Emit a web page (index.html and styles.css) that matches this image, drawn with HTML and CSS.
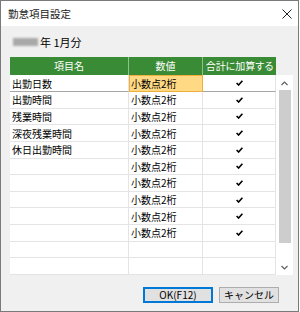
FILE: index.html
```html
<!DOCTYPE html>
<html lang="ja">
<head>
	<meta charset="UTF-8">
	<title>勤怠項目設定</title>
	<link rel="stylesheet" href="styles.css">
</head>
<body>
<div class="window">
  <div class="titlebar">
    <span class="title">勤怠項目設定</span>
    <svg class="close" width="10" height="10" viewBox="0 0 10 10"><path d="M0.5 0.5 L9.5 9.5 M9.5 0.5 L0.5 9.5" stroke="#222" stroke-width="1"/></svg>
  </div>
  <div class="content">
    <div class="period"><span class="blur"></span>年 1月分</div>

    <div class="grid-wrap">
      <div class="grid">
        <div class="head">項目名</div>
        <div class="head">数値</div>
        <div class="head last">合計に加算する</div>

        <div class="cell cur">出勤日数</div><div class="cell cur sel">小数点2桁</div><div class="cell cur chk"><svg width="7" height="6" viewBox="0 0 7 6"><path d="M0.6 3 L2.6 5 L6.4 0.8" fill="none" stroke="#000" stroke-width="1.6"/></svg></div>
        <div class="cell">出勤時間</div><div class="cell">小数点2桁</div><div class="cell chk"><svg width="7" height="6" viewBox="0 0 7 6"><path d="M0.6 3 L2.6 5 L6.4 0.8" fill="none" stroke="#000" stroke-width="1.6"/></svg></div>
        <div class="cell">残業時間</div><div class="cell">小数点2桁</div><div class="cell chk"><svg width="7" height="6" viewBox="0 0 7 6"><path d="M0.6 3 L2.6 5 L6.4 0.8" fill="none" stroke="#000" stroke-width="1.6"/></svg></div>
        <div class="cell">深夜残業時間</div><div class="cell">小数点2桁</div><div class="cell chk"><svg width="7" height="6" viewBox="0 0 7 6"><path d="M0.6 3 L2.6 5 L6.4 0.8" fill="none" stroke="#000" stroke-width="1.6"/></svg></div>
        <div class="cell">休日出勤時間</div><div class="cell">小数点2桁</div><div class="cell chk"><svg width="7" height="6" viewBox="0 0 7 6"><path d="M0.6 3 L2.6 5 L6.4 0.8" fill="none" stroke="#000" stroke-width="1.6"/></svg></div>
        <div class="cell"></div><div class="cell">小数点2桁</div><div class="cell chk"><svg width="7" height="6" viewBox="0 0 7 6"><path d="M0.6 3 L2.6 5 L6.4 0.8" fill="none" stroke="#000" stroke-width="1.6"/></svg></div>
        <div class="cell"></div><div class="cell">小数点2桁</div><div class="cell chk"><svg width="7" height="6" viewBox="0 0 7 6"><path d="M0.6 3 L2.6 5 L6.4 0.8" fill="none" stroke="#000" stroke-width="1.6"/></svg></div>
        <div class="cell"></div><div class="cell">小数点2桁</div><div class="cell chk"><svg width="7" height="6" viewBox="0 0 7 6"><path d="M0.6 3 L2.6 5 L6.4 0.8" fill="none" stroke="#000" stroke-width="1.6"/></svg></div>
        <div class="cell"></div><div class="cell">小数点2桁</div><div class="cell chk"><svg width="7" height="6" viewBox="0 0 7 6"><path d="M0.6 3 L2.6 5 L6.4 0.8" fill="none" stroke="#000" stroke-width="1.6"/></svg></div>
        <div class="cell"></div><div class="cell">小数点2桁</div><div class="cell chk"><svg width="7" height="6" viewBox="0 0 7 6"><path d="M0.6 3 L2.6 5 L6.4 0.8" fill="none" stroke="#000" stroke-width="1.6"/></svg></div>
        <div class="cell"></div><div class="cell"></div><div class="cell"></div>
        <div class="cell"></div><div class="cell"></div><div class="cell"></div>
      </div>

      <div class="scrollbar">
        <svg class="arrow up" width="7" height="5" viewBox="0 0 7 5"><path d="M0.5 4 L3.5 1 L6.5 4" fill="none" stroke="#606060" stroke-width="1.2"/></svg>
        <div class="thumb"></div>
        <svg class="arrow down" width="7" height="5" viewBox="0 0 7 5"><path d="M0.5 1 L3.5 4 L6.5 1" fill="none" stroke="#606060" stroke-width="1.2"/></svg>
      </div>
    </div>

    <div class="buttons">
      <button class="btn default">OK(F12)</button>
      <button class="btn cancel">キャンセル</button>
    </div>
  </div>
</div>
</body>
</html>
```

FILE: styles.css
```css
body,div,p,button { margin:0; padding:0; }
body { background:#fff; color:#000; font-family:"Noto Sans CJK JP", "Noto Sans", sans-serif; font-size:10px; }

.window{
	width: 297px;
	height: 310px;
	border: 1px solid #7a7a7a;
	background: #f0f0f0;
	display: flex;
	flex-direction: column;
}
.titlebar{
	height: 25px;
	background: #fff;
	display: flex;
	align-items: center;
	justify-content: space-between;
	padding: 0 6px 0 7px;
}
.title{
	font-size: 10.5px;
	color: #1a1a1a;
}
.close{ margin-top: 1px; }

.content{
	flex: 1;
	display: flex;
	flex-direction: column;
	padding: 8px 0 0 9px;
}
.period{
	height: 16px;
	line-height: 16px;
	font-size: 11px;
	display: flex;
	align-items: center;
	padding-left: 3px;
}
.blur{
	display: inline-block;
	width: 25px;
	height: 8px;
	background: #a9a9a9;
	filter: blur(1.2px);
	margin-right: 2px;
}

.grid-wrap{
	margin-top: 7px;
	display: flex;
	width: 283px;
}
.grid{
	display: grid;
	grid-template-columns: 119px 74px 73px;
	grid-template-rows: 18px repeat(12, 1fr);
	height: 218px;
	background: #fff;
}
.head{
	background: #3a8b35;
	color: #fff;
	text-align: center;
	line-height: 18px;
	border-right: 1px solid #8cc487;
	font-feature-settings: "palt";
}
.head.last{ border-right: none; }
.cell{
	border-right: 1px solid #e4e4e4;
	border-bottom: 1px solid #e4e4e4;
	padding-left: 2px;
	display: flex;
	align-items: center;
	white-space: nowrap;
}
.cell.cur{ border-bottom-color: #a6a6a6; }
.cell.sel{
	background: #ffd983;
	border: 1px solid #f2ae3a;
	padding-left: 1px;
}
.cell.chk{
	justify-content: center;
	padding-left: 0;
}

.scrollbar{
	margin-top: 18px;
	width: 17px;
	height: 200px;
	background: #fff;
	display: flex;
	flex-direction: column;
	align-items: center;
}
.arrow.up{ margin: 6px 0 4px; }
.thumb{
	width: 12px;
	height: 153px;
	background: #cdcdcd;
}
.arrow.down{ margin: auto 0 5px; }

.buttons{
	margin-top: 12px;
	display: flex;
	justify-content: flex-end;
	gap: 6px;
	padding-right: 19px;
}
.btn{
	height: 16px;
	font-family: "Noto Sans CJK JP", "Noto Sans", sans-serif;
	font-size: 10px;
	line-height: 12px;
	background: #e1e1e1;
	border: 1px solid #adadad;
	color: #000;
}
.btn.default{
	width: 70px;
	border: 2px solid #0078d7;
}
.btn.cancel{ width: 60px; }
```
